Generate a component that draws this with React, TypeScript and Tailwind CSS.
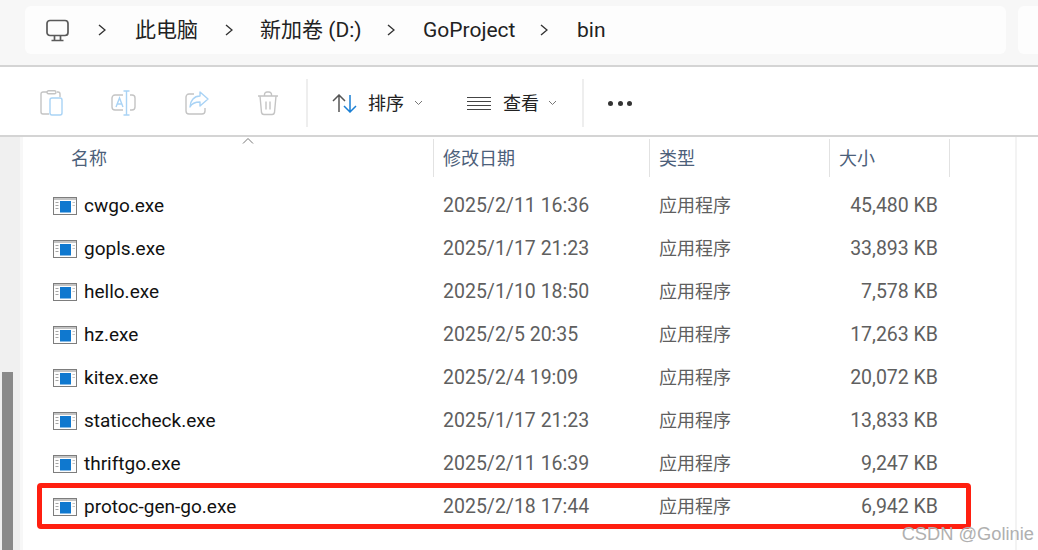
const font = { fontFamily: 'Roboto, "Noto Sans CJK SC", sans-serif' };

const files = [
  { name: "cwgo.exe", date: "2025/2/11 16:36", size: "45,480 KB" },
  { name: "gopls.exe", date: "2025/1/17 21:23", size: "33,893 KB" },
  { name: "hello.exe", date: "2025/1/10 18:50", size: "7,578 KB" },
  { name: "hz.exe", date: "2025/2/5 20:35", size: "17,263 KB" },
  { name: "kitex.exe", date: "2025/2/4 19:09", size: "20,072 KB" },
  { name: "staticcheck.exe", date: "2025/1/17 21:23", size: "13,833 KB" },
  { name: "thriftgo.exe", date: "2025/2/11 16:39", size: "9,247 KB" },
  { name: "protoc-gen-go.exe", date: "2025/2/18 17:44", size: "6,942 KB" },
];

const Chevron = () => (
  <svg width="8" height="12" viewBox="0 0 8 12" fill="none" stroke="#333" strokeWidth="1.4">
    <path d="M1 1l6 5-6 5" />
  </svg>
);

const Down = () => (
  <svg width="9" height="6" viewBox="0 0 9 6" fill="none" stroke="#777" strokeWidth="1">
    <path d="M1 1l3.5 3.5L8 1" />
  </svg>
);

const ExeIcon = () => (
  <svg width="24" height="18" viewBox="0 0 24 18" className="shrink-0">
    <rect x="0.5" y="0.5" width="23" height="17" fill="#fdfdfd" stroke="#7d7d7d" />
    <rect x="1" y="1" width="22" height="2" fill="#c4c4c4" />
    <rect x="7" y="4" width="11" height="11.5" fill="#0f78cf" />
    <rect x="2.5" y="5" width="3" height="1" fill="#a5a5a5" />
    <rect x="2.5" y="8" width="3" height="1" fill="#a5a5a5" />
    <rect x="2.5" y="11" width="3" height="1" fill="#a5a5a5" />
    <rect x="19.5" y="5" width="2.5" height="1" fill="#c4c4c4" />
    <rect x="19.5" y="8" width="2.5" height="1" fill="#c4c4c4" />
  </svg>
);

const ClipboardIcon = () => (
  <svg width="24" height="26" viewBox="0 0 24 26" fill="none" strokeWidth="1.4">
    <path d="M7 2H3a2 2 0 0 0-2 2v18a2 2 0 0 0 2 2h6" stroke="#c4c4c4" />
    <path d="M17 2h1a2 2 0 0 1 2 2v3" stroke="#c4c4c4" />
    <rect x="7" y="0.8" width="9" height="3" rx="1.5" stroke="#c4c4c4" />
    <rect x="10" y="8" width="12" height="17" rx="2" stroke="#a9d3f5" />
  </svg>
);

const RenameIcon = () => (
  <svg width="25" height="26" viewBox="0 0 25 26" fill="none" strokeWidth="1.4">
    <path d="M12 5H4a3 3 0 0 0-3 3v9a3 3 0 0 0 3 3h8" stroke="#c4c4c4" />
    <path d="M19 5h2a3 3 0 0 1 3 3v9a3 3 0 0 1-3 3h-2" stroke="#c4c4c4" />
    <path d="M5 17l3.5-9 3.5 9M6.3 14h4.6" stroke="#a9d3f5" />
    <path d="M12.5 1h6M15.5 1v24M12.5 25h6" stroke="#a9d3f5" />
  </svg>
);

const ShareIcon = () => (
  <svg width="24" height="24" viewBox="0 0 24 24" fill="none" strokeWidth="1.4">
    <path d="M9 3H4a3 3 0 0 0-3 3v14a3 3 0 0 0 3 3h13a3 3 0 0 0 3-3v-3" stroke="#c4c4c4" />
    <path d="M15 1l8 7-8 7v-4c-5 0-8 1-10 5 0-6 4-11 10-11z" stroke="#a9d3f5" strokeLinejoin="round" />
  </svg>
);

const TrashIcon = () => (
  <svg width="22" height="25" viewBox="0 0 22 25" fill="none" stroke="#c4c4c4" strokeWidth="1.4">
    <path d="M1 5h20M7.5 5V3.5a2.5 2.5 0 0 1 2.5-2.5h2a2.5 2.5 0 0 1 2.5 2.5V5" />
    <path d="M3 5l1.5 16.5a2.5 2.5 0 0 0 2.5 2h8a2.5 2.5 0 0 0 2.5-2L19 5" />
    <path d="M9 10.5v8M13 10.5v8" />
  </svg>
);

const SortIcon = () => (
  <svg width="25" height="19" viewBox="0 0 25 19" fill="none" strokeWidth="1.5">
    <path d="M1 7l6-6 6 6M7 1v17" stroke="#555" />
    <path d="M12 12l6 6 6-6M18 18V1" stroke="#1a7fd4" />
  </svg>
);

const PcIcon = () => (
  <svg width="23" height="23" viewBox="0 0 23 23" fill="none" stroke="#5a5a5a" strokeWidth="1.7">
    <rect x="1" y="1.5" width="21" height="15" rx="3" />
    <path d="M8.5 17v4M14.5 17v4M5.5 21.5h12" />
  </svg>
);

const App = () => {
  return (
    <div className="relative flex h-[550px] w-[1038px] flex-col overflow-hidden bg-white" style={font}>
      {/* address bar */}
      <div className="flex h-[67px] shrink-0 gap-3 border-b-2 border-[#d4d4d4] bg-[#f7f7f7] pl-[25px] pt-[6px]">
        <div className="flex h-[48px] w-[981px] items-center rounded-md bg-[#fdfdfd] text-[21px] text-[#222]">
          <div className="ml-[21px] mr-[29px]"><PcIcon /></div>
          <Chevron />
          <span className="ml-[29px] mt-[2px] w-[63px] whitespace-nowrap">此电脑</span>
          <div className="ml-[27px]"><Chevron /></div>
          <span className="ml-[27px] mt-[2px] w-[100px] whitespace-nowrap">新加卷 (D:)</span>
          <div className="ml-[27px]"><Chevron /></div>
          <span className="ml-[28px] mt-[2px] w-[91px]">GoProject</span>
          <div className="ml-[26px]"><Chevron /></div>
          <span className="ml-[29px] mt-[2px]">bin</span>
        </div>
        <div className="h-[48px] flex-1 rounded-l-md bg-[#fdfdfd]" />
      </div>

      {/* toolbar */}
      <div className="flex h-[70px] shrink-0 items-center border-b-2 border-[#d4d4d4] pt-[4px]">
        <div className="ml-[40px]"><ClipboardIcon /></div>
        <div className="ml-[47px]"><RenameIcon /></div>
        <div className="ml-[49px]"><ShareIcon /></div>
        <div className="ml-[48px]"><TrashIcon /></div>
        <div className="ml-[27px] h-[48px] w-[2px] bg-[#eeeeee]" />
        <div className="ml-[24px]"><SortIcon /></div>
        <span className="ml-[11px] w-[37px] whitespace-nowrap text-[18px] text-[#222]">排序</span>
        <div className="ml-[9px]"><Down /></div>
        <div className="ml-[44px] flex h-[13px] w-[24px] flex-col justify-between">
          <div className="h-px bg-[#444]" />
          <div className="h-px bg-[#444]" />
          <div className="h-px bg-[#444]" />
          <div className="h-px bg-[#444]" />
        </div>
        <span className="ml-[12px] w-[36px] whitespace-nowrap text-[18px] text-[#222]">查看</span>
        <div className="ml-[9px]"><Down /></div>
        <div className="ml-[25px] h-[48px] w-[2px] bg-[#eeeeee]" />
        <div className="ml-[24px] flex gap-[4.5px]">
          <div className="h-[5px] w-[5px] rounded-full bg-[#333]" />
          <div className="h-[5px] w-[5px] rounded-full bg-[#333]" />
          <div className="h-[5px] w-[5px] rounded-full bg-[#333]" />
        </div>
      </div>

      <div className="flex min-h-0 flex-1">
        {/* left strip with scrollbar */}
        <div className="flex h-full w-[20px] shrink-0 flex-col justify-end bg-[#f0f0f0] pl-[2px]">
          <div className="h-[178px] w-[11px] bg-[#8a8a8a]" />
        </div>
        <div className="w-[3px] shrink-0 bg-[#f7f7f7]" />

        <div className="relative min-w-0 flex-1">
          {/* column headers */}
          <div className="relative grid h-[40px] grid-cols-[410px_216px_180px_120px_1px] items-center pt-[2px] text-[18px] text-[#4c607a]">
            <span className="pl-[48px]">名称</span>
            <span className="flex h-full items-center border-l border-[#e2e2e2] pl-[9px]">修改日期</span>
            <span className="flex h-full items-center border-l border-[#e2e2e2] pl-[9px]">类型</span>
            <span className="flex h-full items-center border-l border-[#e2e2e2] pl-[9px]">大小</span>
            <span className="h-full bg-[#e2e2e2]" />
            <svg width="12" height="6" viewBox="0 0 12 6" fill="none" stroke="#777" className="absolute left-[219px] top-[1px]">
              <path d="M1 5.5l5-5 5 5" />
            </svg>
          </div>

          {/* file rows */}
          <div className="mt-[7px] flex flex-col">
            {files.map((file) => (
              <div key={file.name} className="relative grid h-[43px] grid-cols-[410px_216px_180px_120px] items-center text-[19.5px]">
                <div className="flex items-center gap-[7px] pl-[30px] text-[19px] text-[#111]">
                  <ExeIcon />
                  <span className="mt-[2px]">{file.name}</span>
                </div>
                <span className="pl-[10px] text-[#5f5f5f]">{file.date}</span>
                <span className="pl-[10px] text-[18px] text-[#5f5f5f]">应用程序</span>
                <span className="pr-[11px] text-right text-[#5f5f5f]">{file.size}</span>
                {file.name === "protoc-gen-go.exe" && (
                  <div className="absolute left-[14px] top-[-2px] h-[46px] w-[934px] rounded-[4px] border-[5px] border-[#ff1f10]" />
                )}
              </div>
            ))}
          </div>
          <div className="absolute bottom-0 right-[21px] top-0 w-[2px] bg-[#f3f3f3]" />
        </div>
      </div>

      <span className="absolute bottom-[6px] right-[4px] text-[18.3px] leading-5 text-[#b0b0b0]" style={{ fontFamily: '"Liberation Sans", sans-serif' }}>
        CSDN @Golinie
      </span>
    </div>
  );
};

export default App;
